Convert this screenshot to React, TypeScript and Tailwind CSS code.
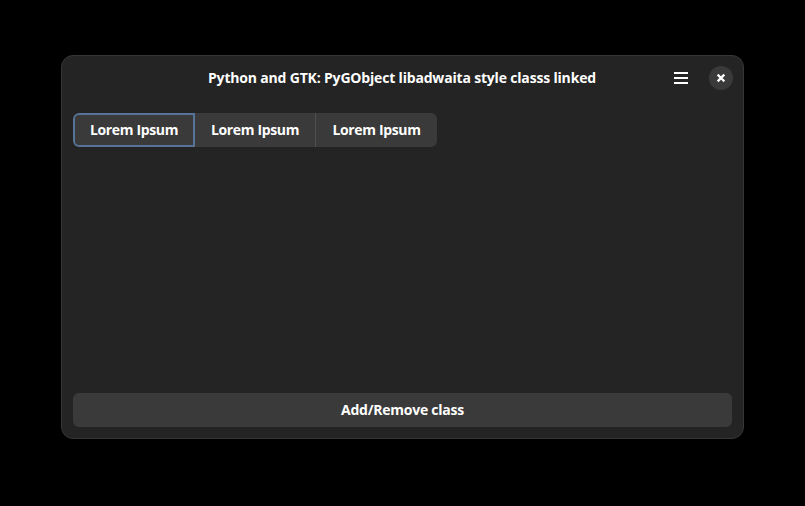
const linked = ['Lorem Ipsum', 'Lorem Ipsum', 'Lorem Ipsum'];

export default function App() {
  return (
    <div className="h-[506px] w-[805px] overflow-hidden bg-black pl-[61px] pt-[55px] font-['Open_Sans','Noto_Sans',sans-serif] text-[14px] font-bold text-white">
      <div className="flex h-[384px] w-[683px] flex-col rounded-[12px] border border-[#363636] bg-[#242424]">
        <header className="flex h-[45px] shrink-0 items-center pl-[146px]">
          <h1 className="w-[388px] whitespace-nowrap pb-[2px] tracking-[-0.18px]">Python and GTK: PyGObject libadwaita style classs linked</h1>
          <button className="ml-[77px] flex h-6 w-4 items-center justify-center" aria-label="Menu">
            <svg className="mb-[2px]" width="16" height="16" viewBox="0 0 16 16" fill="white" shapeRendering="crispEdges"><path d="M1 2h14v2H1zM1 7h14v2H1zM1 12h14v2H1z" /></svg>
          </button>
          <button className="mb-px ml-5 flex h-6 w-6 items-center justify-center rounded-full bg-[#3a3a3a]" aria-label="Close">
            <svg width="16" height="16" viewBox="0 0 16 16" stroke="white" strokeWidth="2.3" strokeLinecap="square"><path d="m5.5 5.5 5 5M10.5 5.5l-5 5" /></svg>
          </button>
        </header>
        <main className="flex flex-1 flex-col justify-between px-[11px] pb-[11px] pt-3">
          <div className="flex h-[34px] w-[364px] overflow-hidden rounded-[6px] bg-[#3a3a3a] tracking-[-0.35px]">
            {linked.map((label, i) => (
              <button key={i} className={i === 0 ? 'w-[122px] rounded-l-[6px] border-2 border-[#567398] pb-px' : i === 1 ? 'w-[121px] border-r border-[#505050] pb-px' : 'w-[121px] pb-px'}>{label}</button>
            ))}
          </div>
          <button className="h-[34px] rounded-[6px] bg-[#3a3a3a] pb-px tracking-[-0.25px]">Add/Remove class</button>
        </main>
      </div>
    </div>
  );
}
